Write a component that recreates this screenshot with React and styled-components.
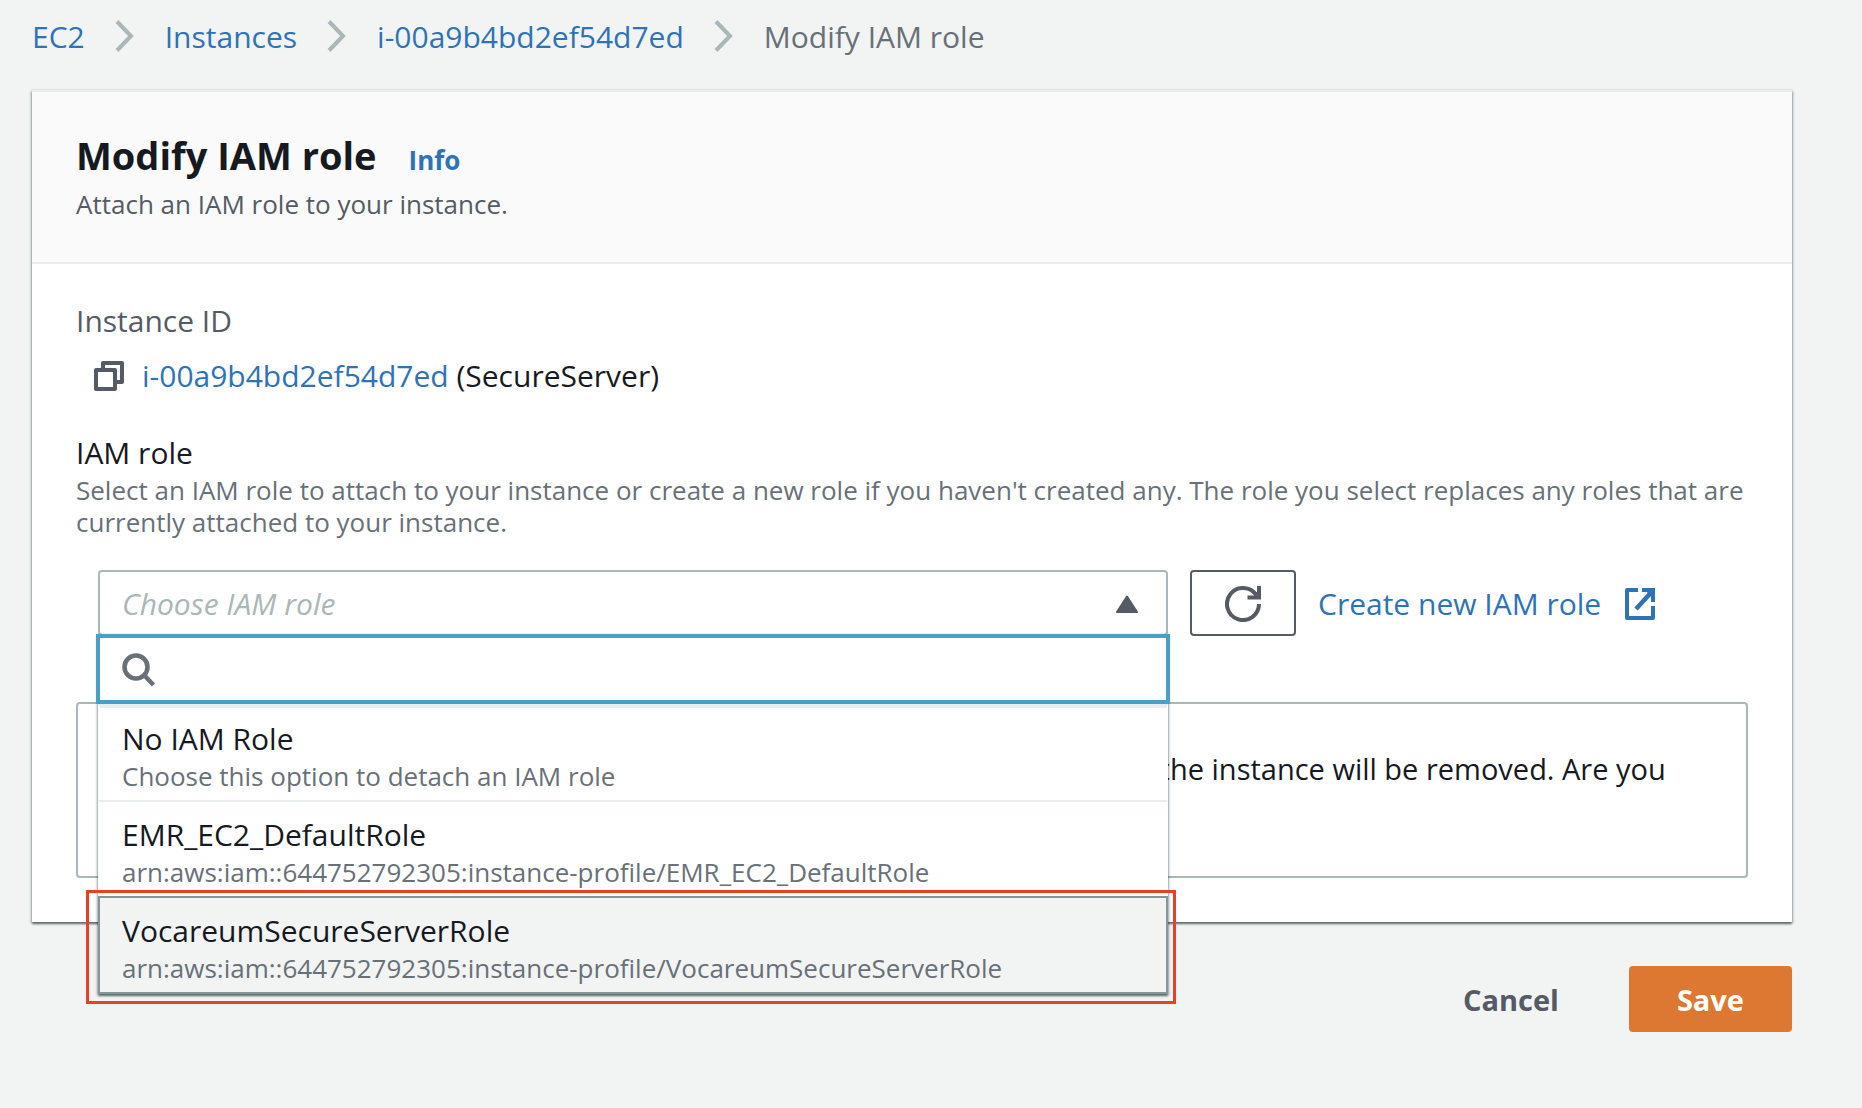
import React from "react";
import styled, { createGlobalStyle, css } from "styled-components";

const color = {
  page: "#f1f4f3",
  panel: "#ffffff",
  header: "#fafafa",
  text: "#16191f",
  label: "#545b64",
  hint: "#687078",
  line: "#aab7b8",
  divider: "#eaeded",
  active: "#879596",
  link: "#2e73b8",
  focus: "#48a0c7",
  primary: "#dc7832",
  callout: "#e84027",
};

const GlobalStyle = createGlobalStyle`
  *, *::before, *::after { box-sizing: border-box; }
  body {
    margin: 0;
    background: ${color.page};
    color: ${color.text};
    font-family: "Open Sans", "Noto Sans", sans-serif;
    font-size: 30px;
    line-height: 38px;
  }
  button, input { font: inherit; color: inherit; }
`;

const shadow = css`
  box-shadow:
    0 2px 2px rgba(0, 28, 36, 0.5),
    1px 1px 3px rgba(0, 28, 36, 0.2),
    -1px 1px 3px rgba(0, 28, 36, 0.2);
`;

const Page = styled.div`
  padding: 0 70px 60px 32px;
`;

const Breadcrumbs = styled.ol`
  display: flex;
  align-items: center;
  gap: 30px;
  margin: 0;
  padding: 18px 0 34px;
  list-style: none;
`;

const Crumb = styled.li`
  display: flex;
  align-items: center;
  gap: 30px;
  color: ${color.hint};
`;

const Link = styled.a`
  color: ${color.link};
  text-decoration: none;
`;

const InfoLink = styled(Link)`
  font-size: 26px;
  line-height: 32px;
  font-weight: 700;
`;

const Card = styled.section`
  border-top: 2px solid ${color.divider};
  background: ${color.panel};
  ${shadow}
`;

const CardHeader = styled.header`
  padding: 42px 44px;
  background: ${color.header};
  border-bottom: 2px solid ${color.divider};
`;

const TitleRow = styled.div`
  display: flex;
  align-items: baseline;
  gap: 32px;
`;

const Title = styled.h1`
  margin: 0;
  font-size: 38px;
  line-height: 42px;
  font-weight: 700;
`;

const Subtitle = styled.p`
  margin: 12px 0 0;
  font-size: 26px;
  line-height: 32px;
  color: ${color.label};
`;

const CardBody = styled.div`
  padding: 38px 44px 44px;
`;

const Term = styled.div`
  color: ${color.label};
`;

const InstanceRow = styled.div`
  display: flex;
  align-items: center;
  gap: 18px;
  padding: 17px 18px 39px;
`;

const IconButton = styled.button`
  display: flex;
  padding: 0;
  border: 0;
  background: none;
  color: ${color.label};
`;

const FieldLabel = styled.label`
  display: block;
`;

const FieldHint = styled.p`
  margin: 2px 0 32px;
  font-size: 26px;
  line-height: 32px;
  color: ${color.hint};
`;

const Controls = styled.div`
  display: grid;
  grid-template-columns: 1fr 106px 430px;
  gap: 22px;
  align-items: center;
  padding-left: 22px;
`;

const Select = styled.div`
  position: relative;
`;

const Trigger = styled.button`
  display: flex;
  align-items: center;
  justify-content: space-between;
  width: 100%;
  height: 66px;
  padding: 2px 28px 0 22px;
  border: 2px solid ${color.line};
  border-radius: 4px;
  background: ${color.panel};
  color: ${color.line};
  font-style: italic;
  text-align: left;
`;

const Menu = styled.div`
  position: absolute;
  z-index: 1;
  top: 64px;
  left: 0;
  right: 0;
  background: ${color.panel};
  ${shadow}
`;

const Search = styled.label`
  display: flex;
  align-items: center;
  gap: 18px;
  height: 70px;
  margin: 0 -2px;
  padding: 2px 22px 0;
  border: 4px solid ${color.focus};
  color: ${color.hint};
`;

const SearchInput = styled.input`
  flex: 1;
  min-width: 0;
  border: 0;
  outline: 0;
  background: none;
  color: ${color.text};
`;

const Options = styled.ul`
  margin: 0;
  padding: 0;
  list-style: none;
`;

const Option = styled.li`
  position: relative;
  padding: 14px 22px 8px;
  border: 0 solid transparent;
  border-width: 2px 2px 0;
  border-top-color: ${color.divider};

  &:first-child {
    padding-top: 12px;
    border-top-width: 4px;
  }

  ${(p) =>
    p.$active &&
    css`
      border-width: 2px;
      border-color: ${color.active};
      background: ${color.page};
    `}
`;

const OptionHint = styled.div`
  margin-top: 2px;
  font-size: 26px;
  line-height: 32px;
  color: ${color.hint};
`;

const Callout = styled.span`
  position: absolute;
  inset: -8px -10px -12px -14px;
  border: 3px solid ${color.callout};
  pointer-events: none;
`;

const RefreshButton = styled.button`
  display: flex;
  align-items: center;
  justify-content: center;
  height: 66px;
  padding: 2px 0 0;
  border: 2px solid ${color.label};
  border-radius: 4px;
  background: ${color.panel};
  color: ${color.label};
`;

const CreateLink = styled(Link)`
  display: flex;
  align-items: center;
  gap: 24px;
  padding-top: 2px;
`;

const Notice = styled.div`
  margin-top: 66px;
  padding: 46px 64px 50px 156px;
  border: 2px solid ${color.line};
  border-radius: 4px;
  font-size: 29px;
  line-height: 38px;
`;

const Actions = styled.div`
  display: flex;
  justify-content: flex-end;
  gap: 22px;
  margin-top: 44px;
`;

const ActionButton = styled.button`
  height: 66px;
  padding: 2px 48px 0;
  border: 0;
  border-radius: 4px;
  background: ${(p) => (p.$primary ? color.primary : "transparent")};
  color: ${(p) => (p.$primary ? "#ffffff" : color.label)};
  font-size: 29px;
  font-weight: 700;
`;

const Chevron = () => (
  <svg width="20" height="34" viewBox="0 0 20 34" fill="none" stroke={color.line} strokeWidth="4" aria-hidden="true">
    <path d="M2 1.500 16 16 2 30.500" />
  </svg>
);

const CopyIcon = () => (
  <svg width="30" height="30" viewBox="0 0 30 30" fill="none" stroke="currentColor" strokeWidth="4" strokeLinejoin="round" aria-hidden="true">
    <rect x="2" y="9" width="19" height="19" />
    <path d="M9 8V2h19v19h-6" />
  </svg>
);

const CaretUp = () => (
  <svg width="22" height="18" viewBox="0 0 22 18" fill={color.label} stroke={color.label} strokeWidth="2" strokeLinejoin="round" aria-hidden="true">
    <path d="M11 1.5 21 17H1Z" />
  </svg>
);

const SearchIcon = () => (
  <svg width="34" height="34" viewBox="0 0 34 34" fill="none" stroke="currentColor" strokeWidth="4.5" aria-hidden="true">
    <circle cx="14" cy="14" r="11.5" />
    <path d="M21.5 21.5 31.5 32" />
  </svg>
);

const RefreshIcon = () => (
  <svg width="36" height="36" viewBox="0 0 36 36" fill="none" stroke="currentColor" strokeWidth="4" aria-hidden="true">
    <path d="M34 18A16 16 0 1 1 31.5 9.4" />
    <path d="M34 0v11.5H22.5" />
    <path d="M27 6l6 5.500V6z" fill="currentColor" stroke="none" />
  </svg>
);

const ExternalIcon = () => (
  <svg width="30" height="32" viewBox="0 0 30 32" fill="none" stroke="currentColor" strokeWidth="4" aria-hidden="true">
    <path d="M13 2H2v28h26V18" strokeLinejoin="round" />
    <path d="M17 2h11v12" />
    <path d="M11 21 27 3.5" strokeWidth="4.5" />
    <path d="M21 3h6v7z" fill="currentColor" stroke="none" />
  </svg>
);

const crumbs = [
  { label: "EC2", href: "#ec2" },
  { label: "Instances", href: "#instances" },
  { label: "i-00a9b4bd2ef54d7ed", href: "#instance" },
  { label: "Modify IAM role" },
];

const roles = [
  { name: "No IAM Role", detail: "Choose this option to detach an IAM role" },
  {
    name: "EMR_EC2_DefaultRole",
    detail: "arn:aws:iam::644752792305:instance-profile/EMR_EC2_DefaultRole",
  },
  {
    name: "VocareumSecureServerRole",
    detail: "arn:aws:iam::644752792305:instance-profile/VocareumSecureServerRole",
    active: true,
  },
];

function RoleSelect() {
  return (
    <Select>
      <Trigger id="iam-role" type="button" aria-haspopup="listbox" aria-expanded="true" aria-controls="role-options">
        Choose IAM role
        <CaretUp />
      </Trigger>
      <Menu>
        <Search>
          <SearchIcon />
          <SearchInput type="text" aria-label="Filter roles" />
        </Search>
        <Options id="role-options" role="listbox" aria-label="IAM role">
          {roles.map((role) => (
            <Option key={role.name} role="option" aria-selected={!!role.active} $active={role.active}>
              {role.name}
              <OptionHint>{role.detail}</OptionHint>
              {role.active && <Callout />}
            </Option>
          ))}
        </Options>
      </Menu>
    </Select>
  );
}

export default function App() {
  return (
    <Page>
      <GlobalStyle />
      <nav aria-label="Breadcrumbs">
        <Breadcrumbs>
          {crumbs.map((crumb) => (
            <Crumb key={crumb.label}>
              {crumb.href ? <Link href={crumb.href}>{crumb.label}</Link> : crumb.label}
              {crumb.href && <Chevron />}
            </Crumb>
          ))}
        </Breadcrumbs>
      </nav>

      <Card>
        <CardHeader>
          <TitleRow>
            <Title>Modify IAM role</Title>
            <InfoLink href="#info">Info</InfoLink>
          </TitleRow>
          <Subtitle>Attach an IAM role to your instance.</Subtitle>
        </CardHeader>
        <CardBody>
          <Term>Instance ID</Term>
          <InstanceRow>
            <IconButton type="button" aria-label="Copy instance ID">
              <CopyIcon />
            </IconButton>
            <span>
              <Link href="#instance">i-00a9b4bd2ef54d7ed</Link> (SecureServer)
            </span>
          </InstanceRow>

          <FieldLabel htmlFor="iam-role">IAM role</FieldLabel>
          <FieldHint>
            Select an IAM role to attach to your instance or create a new role if you haven't created any. The
            role you select replaces any roles that are currently attached to your instance.
          </FieldHint>
          <Controls>
            <RoleSelect />
            <RefreshButton type="button" aria-label="Refresh roles">
              <RefreshIcon />
            </RefreshButton>
            <CreateLink href="#create-role">
              Create new IAM role
              <ExternalIcon />
            </CreateLink>
          </Controls>
          <Notice>
            If you choose No IAM Role, any IAM role that is currently attached to the instance will be removed.
            Are you sure you want to continue?
          </Notice>
        </CardBody>
      </Card>

      <Actions>
        <ActionButton type="button">Cancel</ActionButton>
        <ActionButton type="button" $primary>Save</ActionButton>
      </Actions>
    </Page>
  );
}
